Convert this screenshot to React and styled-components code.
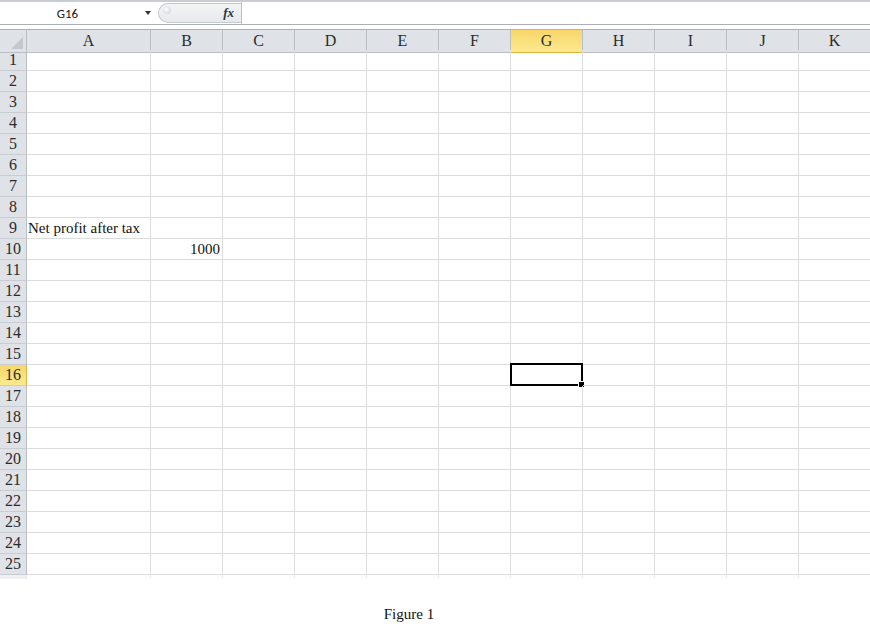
import React from "react"
import styled, { createGlobalStyle, css } from "styled-components"

const GlobalStyle = createGlobalStyle`
  html, body {
    margin: 0;
    padding: 0;
    background: #fff;
  }
  body {
    font-family: "Liberation Serif", "Times New Roman", serif;
  }
`

const Page = styled.div`
  width: 870px;
  height: 636px;
  display: flex;
  flex-direction: column;
  overflow: hidden;
  background: #fff;
`

const FormulaBar = styled.div`
  height: 22px;
  display: flex;
  align-items: stretch;
  border-top: 2px solid #c9cdd3;
  border-bottom: 1px solid #a9b0b8;
  margin-bottom: 4px;
  background: #fff;
`

const NameBox = styled.div`
  width: 155px;
  position: relative;
  display: flex;
  align-items: center;
  justify-content: center;
  font-family: Carlito, "Liberation Sans", Arial, sans-serif;
  font-size: 13px;
  color: #222;
  padding-right: 20px;
  box-sizing: border-box;
`

const DropArrow = styled.span`
  position: absolute;
  right: 4px;
  top: 9px;
  width: 0;
  height: 0;
  border-left: 3.5px solid transparent;
  border-right: 3.5px solid transparent;
  border-top: 4px solid #333;
`

const FxBox = styled.div`
  width: 83px;
  margin: 1px 0 1px 3px;
  border-radius: 11px 0 0 11px;
  border: 1px solid #c4c9cf;
  border-right: none;
  background: linear-gradient(#f3f4f6, #e6e9ed);
  display: flex;
  align-items: center;
  justify-content: space-between;
  padding: 0 7px 0 4px;
  box-sizing: border-box;
`

const Knob = styled.span`
  width: 8px;
  height: 8px;
  border-radius: 50%;
  background: radial-gradient(circle at 40% 40%, #fff, #c9cdd3);
  margin-top: -6px;
`

const Fx = styled.span`
  font-family: "Liberation Serif", serif;
  font-style: italic;
  font-weight: bold;
  font-size: 13px;
  color: #333;
`

const FormulaInput = styled.div`
  flex: 1;
  border-left: 1px solid #b8bec5;
`

const Grid = styled.div`
  display: grid;
  grid-template-columns: 27px 124px repeat(10, 72px);
  grid-auto-rows: 21px;
`

const headerBase = css`
  box-sizing: border-box;
  display: flex;
  align-items: center;
  justify-content: center;
  font-family: "Liberation Serif", "Times New Roman", serif;
  color: #2b2b2b;
  border-right: 1px solid #b9bdc4;
  border-bottom: 1px solid #b9bdc4;
  background: ${p =>
    p.$active ? "linear-gradient(#f8d66a, #fce98f)" : "#dfe2e7"};
`

const Corner = styled.div`
  ${headerBase};
  height: 24px;
  border-top: 1px solid #a9b0b8;
  position: relative;
  &::after {
    content: "";
    position: absolute;
    right: 3px;
    bottom: 3px;
    width: 0;
    height: 0;
    border-left: 12px solid transparent;
    border-bottom: 12px solid #c4c8ce;
  }
`

const ColHeader = styled.div`
  ${headerBase};
  height: 24px;
  border-top: 1px solid #a9b0b8;
  font-size: 16px;
  ${p => p.$active && "border-bottom-color: #e1b43c;"}
`

const RowHeader = styled.div`
  ${headerBase};
  font-size: 16px;
  border-bottom-color: #c9ccd1;
  ${p => p.$active && "border-right-color: #e1b43c;"}
`

const Cell = styled.div`
  box-sizing: border-box;
  position: relative;
  border-right: 1px solid #dadcdd;
  border-bottom: 1px solid #dadcdd;
  font-family: "Liberation Serif", "Times New Roman", serif;
  font-size: 15px;
  color: #111;
  white-space: nowrap;
  overflow: visible;
  display: flex;
  align-items: center;
  justify-content: ${p => (p.$right ? "flex-end" : "flex-start")};
  padding: 0 2px 0 1px;
  z-index: ${p => (p.$text ? 1 : 0)};
`

const Selection = styled.div`
  position: absolute;
  left: -1px;
  top: -2px;
  right: -1px;
  bottom: -1px;
  border: 2px solid #000;
  z-index: 2;
  &::after {
    content: "";
    position: absolute;
    right: -4px;
    bottom: -4px;
    width: 5px;
    height: 5px;
    background: #000;
    border: 1px solid #fff;
  }
`

const Tail = styled.div`
  display: grid;
  grid-template-columns: 27px 124px repeat(10, 72px);
  height: 4px;
`

const TailCell = styled.div`
  box-sizing: border-box;
  border-right: 1px solid #eceded;
  background: ${p => (p.$head ? "#eef0f3" : "transparent")};
`

const Caption = styled.div`
  flex: 1;
  display: flex;
  justify-content: center;
  padding-top: 27px;
  padding-right: 52px;
  font-family: "Liberation Serif", "Times New Roman", serif;
  font-size: 15px;
  color: #111;
`

const COLS = ["A", "B", "C", "D", "E", "F", "G", "H", "I", "J", "K"]
const ROWS = Array.from({ length: 25 }, (_, i) => i + 1)
const DATA = {
  "A9": { text: "Net profit after tax" },
  "B10": { text: "1000", right: true },
}
const ACTIVE_COL = "G"
const ACTIVE_ROW = 16

const App = () => (
  <Page>
    <GlobalStyle />
    <FormulaBar>
      <NameBox>
        G16
        <DropArrow />
      </NameBox>
      <FxBox>
        <Knob />
        <Fx>fx</Fx>
      </FxBox>
      <FormulaInput />
    </FormulaBar>
    <Grid>
      <Corner />
      {COLS.map(c => (
        <ColHeader key={c} $active={c === ACTIVE_COL}>
          {c}
        </ColHeader>
      ))}
      {ROWS.map(r => (
        <React.Fragment key={r}>
          <RowHeader $active={r === ACTIVE_ROW}>{r}</RowHeader>
          {COLS.map(c => {
            const d = DATA[c + r]
            return (
              <Cell key={c} $right={d && d.right} $text={!!d}>
                {d && d.text}
                {c === ACTIVE_COL && r === ACTIVE_ROW && <Selection />}
              </Cell>
            )
          })}
        </React.Fragment>
      ))}
    </Grid>
    <Tail>
      <TailCell $head />
      {COLS.map(c => (
        <TailCell key={c} />
      ))}
    </Tail>
    <Caption>Figure 1</Caption>
  </Page>
)

export default App
